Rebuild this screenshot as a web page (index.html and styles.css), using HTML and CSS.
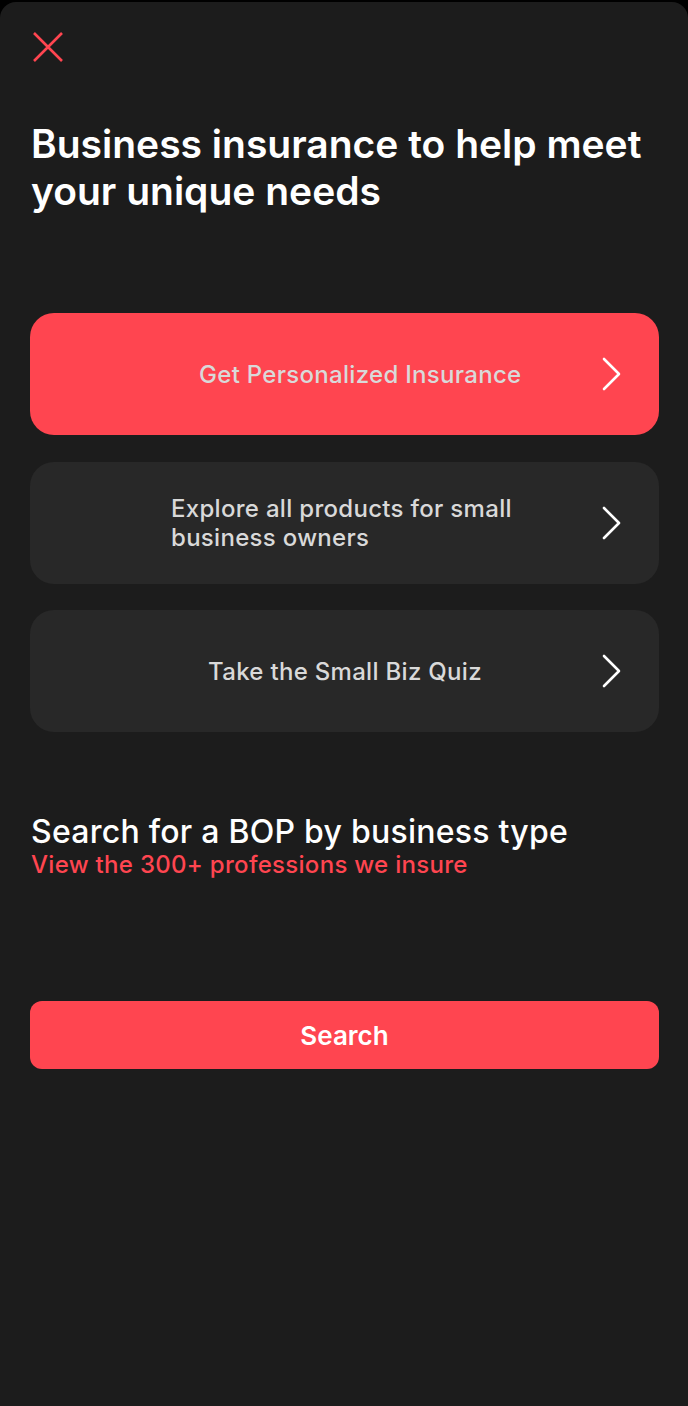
FILE: index.html
```html
<!DOCTYPE html>
<html lang="en">
<head>
<meta charset="utf-8">
<link rel="stylesheet" href="styles.css">
</head>
<body>
<div class="sheet">
  <button class="close" aria-label="Close">
    <svg width="30" height="30" viewBox="0 0 30 30"><path d="M1 1 L29 29 M29 1 L1 29" stroke="#ff4550" stroke-width="2.6" fill="none"/></svg>
  </button>
  <h1 class="title">Business insurance to help meet your unique needs</h1>
  <div class="options">
    <a class="option option-primary">
      <span class="label label-1">Get Personalized Insurance</span>
      <svg class="chev" width="22" height="34" viewBox="0 0 22 34"><path d="M3 2 L18 17 L3 32" stroke="#fff" stroke-width="2.6" fill="none" stroke-linecap="round" stroke-linejoin="round"/></svg>
    </a>
    <a class="option">
      <span class="label label-2">Explore all products for small business owners</span>
      <svg class="chev" width="22" height="34" viewBox="0 0 22 34"><path d="M3 2 L18 17 L3 32" stroke="#fff" stroke-width="2.6" fill="none" stroke-linecap="round" stroke-linejoin="round"/></svg>
    </a>
    <a class="option">
      <span class="label label-3">Take the Small Biz Quiz</span>
      <svg class="chev" width="22" height="34" viewBox="0 0 22 34"><path d="M3 2 L18 17 L3 32" stroke="#fff" stroke-width="2.6" fill="none" stroke-linecap="round" stroke-linejoin="round"/></svg>
    </a>
  </div>
  <section class="search">
    <h2 class="search-title">Search for a BOP by business type</h2>
    <a class="search-link">View the 300+ professions we insure</a>
    <button class="search-btn">Search</button>
  </section>
</div>
</body>
</html>
```
FILE: styles.css
```css
* { box-sizing: border-box; }
html, body { margin: 0; padding: 0; background: #000; }
body {
  font-family: Inter, "Noto Sans", sans-serif;
  width: 688px;
  height: 1406px;
  overflow: hidden;
  padding-top: 2px;
}
.sheet {
  background: #1c1c1c;
  height: 1404px;
  border-radius: 16px 16px 0 0;
  padding: 30px 29px 0 30px;
}
.close {
  display: block;
  background: none;
  border: 0;
  padding: 0;
  margin-left: 3px;
  width: 30px;
  height: 30px;
  cursor: pointer;
}
.close svg { display: block; }
.title {
  margin: 58px 0 0 1px;
  font-size: 39px;
  line-height: 47px;
  font-weight: 600;
  color: #fff;
  letter-spacing: 0;
}
.options {
  margin-top: 99px;
  display: flex;
  flex-direction: column;
  gap: 26.5px;
}
.option {
  display: flex;
  align-items: center;
  height: 122px;
  border-radius: 24px;
  background: #282828;
  padding: 0 36px 0 0;
  cursor: pointer;
}
.option-primary { background: #ff4550; }
.label {
  flex: 1;
  font-size: 24px;
  line-height: 29px;
  font-weight: 500;
  letter-spacing: 0.3px;
  color: #d9d9d9;
}
.label-1 { padding-left: 169px; }
.label-2 { padding-left: 141px; padding-right: 60px; }
.label-3 { padding-left: 178px; }
.chev { display: block; flex: none; }
.search { margin-top: 81px; }
.search-title {
  margin: 0 0 0 1px;
  font-size: 32px;
  line-height: 38px;
  font-weight: 500;
  letter-spacing: 0.25px;
  color: #fff;
}
.search-link {
  display: block;
  margin-left: 1px;
  font-size: 24px;
  line-height: 28px;
  font-weight: 500;
  letter-spacing: 0.3px;
  color: #ff4550;
}
.search-btn {
  display: block;
  width: 100%;
  height: 68px;
  margin-top: 122px;
  border: 0;
  border-radius: 12px;
  background: #ff4550;
  color: #fff;
  font-family: Inter, "Noto Sans", sans-serif;
  font-size: 26px;
  font-weight: 600;
  cursor: pointer;
}
```
